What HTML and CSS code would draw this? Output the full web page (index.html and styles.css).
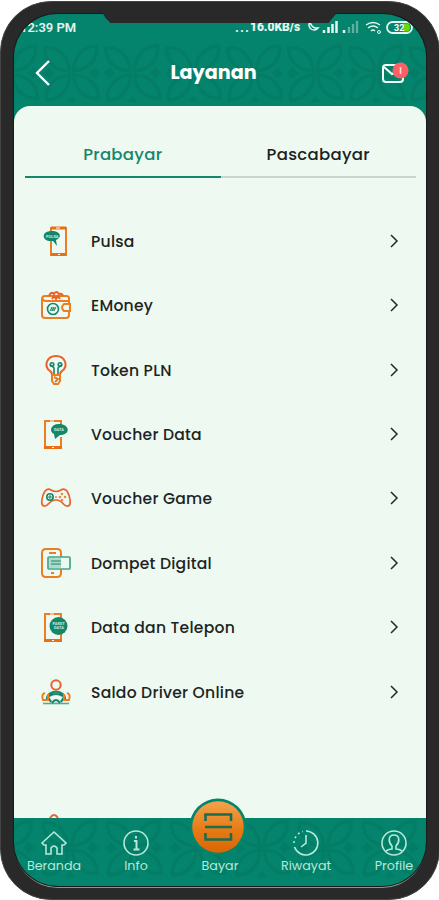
FILE: index.html
```html
<!DOCTYPE html>
<html lang="id">
<head>
<meta charset="utf-8">
<title>Layanan</title>
<link rel="stylesheet" href="styles.css">
</head>
<body>
<div class="phone">
  <div class="notch"></div>
  <main class="screen">
    <header class="header">
      <svg class="batik" aria-hidden="true">
        <defs>
          <g id="flower" fill="none" stroke="#057660" stroke-width="3.6">
            <path d="M2 -2C2 -14 10 -27 25 -27C27 -13 16 -3 2 -2Z"/>
            <path transform="rotate(90)" d="M2 -2C2 -14 10 -27 25 -27C27 -13 16 -3 2 -2Z"/>
            <path transform="rotate(180)" d="M2 -2C2 -14 10 -27 25 -27C27 -13 16 -3 2 -2Z"/>
            <path transform="rotate(270)" d="M2 -2C2 -14 10 -27 25 -27C27 -13 16 -3 2 -2Z"/>
            <path d="M23 -6L29 0L23 6L17 0ZM-23 -6L-29 0L-23 6L-17 0Z" fill="#057660" stroke="none"/>
            <path d="M-5 29L0 23L5 29Z" fill="#057660" stroke="none"/>
          </g>
          <pattern id="batik-top" x="27" y="29" width="61" height="61" patternUnits="userSpaceOnUse"><use href="#flower" x="30.5" y="30"/></pattern>
          <pattern id="batik-bottom" x="24" y="-3" width="64" height="66" patternUnits="userSpaceOnUse"><use href="#flower" x="32" y="33"/></pattern>
        </defs>
        <rect y="29" width="412" height="61" fill="url(#batik-top)" opacity=".5"/>
      </svg>
      <div class="status">
        <span class="clock">12:39 PM</span>
        <span class="speed">...<b>16.0KB/s</b></span>
        <svg class="indicators" width="112" height="16" viewBox="0 0 112 16" fill="none" stroke="#e5f5ef">
          <path d="M6 3A5 5 0 1 0 14 9Q8 10 6 3Z" stroke-width="1.5"/>
          <path d="M20 14v-3M24.500 14V8M28.500 14V5M32.500 14V2" stroke-width="2.5"/>
          <path d="M40 14v-3" stroke-width="2.5"/><path d="M45 14V8M49 14V5M53 14V2" stroke-width="2.3" opacity=".4"/>
          <path d="M62 6Q69 1 76 6M64 9Q69 5 74 9M67 12Q69 10 71 12" stroke-width="1.4"/><circle cx="75" cy="13" r="1.5"/>
          <rect x="83" y="3" width="25" height="11" rx="5.500" stroke-width="1.8"/><path d="M99 4.500h5q4 4 0 8h-5z" fill="#6bd60b" stroke="none"/>
          <text x="90" y="12" class="battery">32</text>
        </svg>
      </div>
      <div class="titlebar">
        <svg class="back" width="18" height="28" viewBox="0 0 18 28"><path d="M15 2L3 14L15 26" fill="none" stroke="#fff" stroke-width="2.4"/></svg>
        <h1>Layanan</h1>
        <svg class="mail" width="29" height="26" viewBox="0 0 29 26"><rect x="3" y="5" width="20" height="17" rx="3" fill="none" stroke="#f3fff9" stroke-width="2"/><path d="M4 7L12 14L17 12" fill="none" stroke="#f3fff9" stroke-width="2"/><circle cx="20.500" cy="10.500" r="8" fill="#fb6066"/><path d="M20.500 7v7" stroke="#ffdada" stroke-width="1.6"/></svg>
      </div>
    </header>

    <section class="sheet">
      <nav class="tabs">
        <span class="tab active">Prabayar</span>
        <span class="tab">Pascabayar</span>
      </nav>
      <ul class="services">
        <li><svg class="icon" viewBox="0 0 32 32"><path d="M11 7V3H26V30H11V15" class="o"/><path d="M11 28H26V31H11Z" fill="#e96f12"/><path d="M11 3h15" stroke="#e96f12" stroke-width="3"/><path d="M16 3h4M18 29.5h2" stroke="#fff"/><path d="M12 6C1 6 2 15 9 16L13 16L17 21L16 15C23 12 20 6 12 6Z" class="tf"/><text x="6" y="13" class="tiny">PULSA</text></svg><span>Pulsa</span><svg class="chev" viewBox="0 0 10 14"><path d="M2 1L8 7L2 13"/></svg></li>
        <li><svg class="icon" viewBox="0 0 32 32"><path d="M29 15V9Q29 7 26 7H5Q2 7 2 10V26Q2 29 5 29H26Q29 29 29 26V22M2 9Q3 12 6 12H28" class="o"/><path d="M9 7Q11 2 14 5Q16 1 19 5Q22 4 23 7M12 10l2-3 2 3 2-3 2 3" class="o red"/><path d="M30 15H24Q20 18.500 24 22H30Z" class="o"/><circle cx="13" cy="20" r="5.500" class="t"/><path d="M10 22l2-4v4l2-4v4l2-4" class="t thin"/></svg><span>EMoney</span><svg class="chev" viewBox="0 0 10 14"><path d="M2 1L8 7L2 13"/></svg></li>
        <li><svg class="icon" viewBox="0 0 32 32"><path d="M12 21Q12 18 10 17C3 12 7 2 16 2C25 2 29 12 22 17Q20 18 20 21" class="o red"/><path d="M14 20V14L11 11M18 20V14L21 11" class="t"/><circle cx="12" cy="10.500" r="1.800" class="t"/><circle cx="20" cy="10.500" r="1.800" class="t"/><path d="M12 21H20V27L18 30H14L12 27Z" class="o"/><path d="M14 23l4 2-3 3" class="o"/></svg><span>Token PLN</span><svg class="chev" viewBox="0 0 10 14"><path d="M2 1L8 7L2 13"/></svg></li>
        <li><svg class="icon" viewBox="0 0 32 32"><path d="M21 7V3H5V30H21V19" class="o"/><path d="M4 28H22V31H4Z" fill="#e96f12"/><path d="M10 3h4M12 29.500h2" stroke="#fff"/><path d="M19 6C10 6 9 14 14 16L15 21L20 17C31 17 30 6 19 6Z" class="tf"/><text x="14" y="13" class="tiny">DATA</text></svg><span>Voucher Data</span><svg class="chev" viewBox="0 0 10 14"><path d="M2 1L8 7L2 13"/></svg></li>
        <li><svg class="icon" viewBox="0 0 32 32"><path d="M5 9Q8 6 11 8Q16 11 21 8Q24 6 27 9C30 14 32 23 28 24C24 25 23 20 20 19Q16 17 12 19C9 20 7 25 4 24C0 23 2 14 5 9Z" class="o red thin-line"/><circle cx="10" cy="15" r="3.200" class="t"/><path d="M10 13v4M8 15h4" class="t thin"/><g fill="#eb8a42"><circle cx="22" cy="12" r="1.300"/><circle cx="25" cy="15" r="1.300"/><circle cx="20" cy="15" r="1.300"/><circle cx="22" cy="18" r="1.300"/><circle cx="16" cy="15" r="1"/></g></svg><span>Voucher Game</span><svg class="chev" viewBox="0 0 10 14"><path d="M2 1L8 7L2 13"/></svg></li>
        <li><svg class="icon" viewBox="0 0 32 32"><path d="M21 10V6Q21 2 17 2H6Q2 2 2 6V26Q2 30 6 30H17Q21 30 21 26V22M9 6h7M11 26h3" class="o"/><rect x="8" y="10" width="22" height="12" rx="1" fill="#eaf9ef" class="card"/><path d="M9 11H21V21H9Z" fill="#aedbcb"/><path d="M11 14h10M11 17h10" class="t thin"/></svg><span>Dompet Digital</span><svg class="chev" viewBox="0 0 10 14"><path d="M2 1L8 7L2 13"/></svg></li>
        <li><svg class="icon" viewBox="0 0 32 32"><path d="M21 7V3H5V30H21V22" class="o"/><path d="M4 28H22V31H4Z" fill="#e96f12"/><path d="M10 3h4M12 29.500h2" stroke="#fff"/><circle cx="18.500" cy="15" r="9" class="tf"/><text x="12.500" y="14" class="tiny">PAKET</text><text x="14" y="18" class="tiny">DATA</text></svg><span>Data dan Telepon</span><svg class="chev" viewBox="0 0 10 14"><path d="M2 1L8 7L2 13"/></svg></li>
        <li><svg class="icon" viewBox="0 0 32 32"><circle cx="16" cy="9" r="4.700" class="o red"/><path d="M7 24C6 13 26 13 25 24M9 20Q16 16 23 20M12 27q4-6 8 0M8 21l3 5M24 21l-3 5" class="t steer"/><path d="M3 27.500H29" class="t" opacity=".7"/><path d="M5 17Q1 18 3 24H8V18M27 17Q31 18 29 24H24V18" class="o"/></svg><span>Saldo Driver Online</span><svg class="chev" viewBox="0 0 10 14"><path d="M2 1L8 7L2 13"/></svg></li>
      </ul>
      <svg class="peek" width="12" height="5" viewBox="0 0 12 5"><path d="M2 5Q6-1 10 5" class="o red"/></svg>
    </section>

    <footer class="nav">
      <svg class="batik" aria-hidden="true"><rect width="412" height="66" fill="url(#batik-bottom)" opacity=".5"/></svg>
      <div class="item"><svg viewBox="0 0 28 28"><path d="M2 14L14 3L26 14L24 16H22V25H17V19Q14 15 11 19V25H6V16H4Z"/></svg><span>Beranda</span></div>
      <div class="item"><svg viewBox="0 0 28 28"><circle cx="14" cy="14" r="12"/><path d="M14 7v2.500M12 12h2.500v8M11.500 20.500h6" stroke-width="2"/></svg><span>Info</span></div>
      <div class="item pay"><svg viewBox="0 0 60 60"><defs><linearGradient id="orange" x2="0" y2="1"><stop stop-color="#f4a34d"/><stop offset=".55" stop-color="#e67b16"/><stop offset="1" stop-color="#dd6500"/></linearGradient></defs><circle cx="30" cy="30" r="28.500" fill="#04846c" stroke="none"/><circle cx="30" cy="30" r="25.800" fill="url(#orange)" stroke="none"/><path d="M17.500 24V17.500H43V24M17 30H44M17.500 36V42.500H43V36" stroke="#1b6c50" stroke-width="2.600"/></svg><span>Bayar</span></div>
      <div class="item"><svg viewBox="0 0 28 28"><path d="M14 2A12 12 0 1 1 2.500 18"/><path d="M2 14A12 12 0 0 1 11 2.500" stroke-dasharray="2 3"/><path d="M14 6V14L9 18"/></svg><span>Riwayat</span></div>
      <div class="item"><svg viewBox="0 0 28 28"><circle cx="14" cy="14" r="12"/><path d="M6 22Q9 20 12 20V17C8 13 8 6 14 6S20 13 16 17V20Q19 20 22 22"/></svg><span>Profile</span></div>
    </footer>
  </main>
</div>
</body>
</html>
```
FILE: styles.css
```css
* { box-sizing: border-box; }
html, body { margin: 0; background: #fff; }
body { width: 439px; height: 900px; overflow: hidden; font-family: Poppins, Inter, "Open Sans", sans-serif; }
.phone { position: relative; width: 439px; height: 900px; padding-top: 2px; }
.phone::before { content: ""; position: absolute; inset: 1px -1px 0 0; border-radius: 51px; background: #292929; border: 1px solid #444; }
.screen { position: relative; width: 412px; height: 872px; margin: 12px 0 0 14px; border-radius: 43px 43px 44px 44px; overflow: hidden; background: #04846c; display: flex; flex-direction: column; box-shadow: 0 0 0 1px #171b1a, 0 2px 0 #8a9691; }
.notch { position: absolute; z-index: 3; left: 102px; top: 12px; width: 236px; height: 11px; background: #292929; clip-path: polygon(0 0, 100% 0, 98.5% 35%, 96% 100%, 3.5% 100%, 1.5% 55%); }
.batik { position: absolute; inset: 0; width: 100%; height: 100%; }
.header { position: relative; height: 104px; flex: none; }
.status { position: relative; display: flex; align-items: center; height: 26px; padding-left: 6px; color: #e5f5ef; font: 600 13px Roboto, sans-serif; }
.clock { width: 215px; white-space: nowrap; }
.speed { width: 69px; font-size: 14px; letter-spacing: 1px; white-space: nowrap; display: flex; align-items: center; }
.speed b { font-size: 12px; letter-spacing: 0; }
.indicators { flex: none; }
.battery { font: 700 9px Roboto, sans-serif; fill: #fff; stroke: none; }
.titlebar { position: relative; display: flex; align-items: center; height: 64px; padding: 0 17px 0 20px; margin-top: 1px; }
h1 { margin: 0 auto; padding-right: 5px; font-size: 19.2px; font-weight: 700; line-height: 27px; padding-bottom: 1px; color: #fff; }
.back { margin-top: -1px; }
.sheet { position: relative; height: 712px; margin-top: -12px; background: #eefaf1; border-radius: 16px 16px 0 0; flex: none; }
.tabs { display: flex; padding: 0 10px 0 11px; height: 72px; }
.tab { flex: 1; display: flex; justify-content: center; align-items: center; padding-top: 26px; border-bottom: 2px solid #c9d5cd; font-size: 16.5px; font-weight: 500; letter-spacing: .3px; color: #1d211f; }
.tab.active { color: #16866b; border-color: #16866b; }
.services { list-style: none; margin: 0; padding: 30.5px 27px 0 26px; }
.services li { height: 64.43px; display: flex; align-items: center; color: #20241f; font-size: 15.6px; font-weight: 500; letter-spacing: .24px; white-space: nowrap; }
.services span { padding-top: 1px; }
.icon { width: 32px; height: 32px; margin-right: 19px; }
.chev { width: 10px; height: 14px; margin-left: auto; fill: none; stroke: #262a28; stroke-width: 1.5; }
.o { fill: none; stroke: #eb7d22; stroke-width: 2; }
.red { stroke: #e9622c; }
.thin-line { stroke-width: 1.7; }
.t { fill: none; stroke: #16866b; stroke-width: 1.6; }
.thin { stroke-width: 1; }
.steer { stroke-width: 2.2; }
.tf { fill: #16866b; }
.card { stroke: #46a38c; stroke-width: 1.7; }
.tiny { font: 700 4px Roboto, sans-serif; letter-spacing: 0; fill: #c6eee0; }
.peek { position: absolute; left: 34px; bottom: 0; }
.nav { position: relative; height: 68px; flex: none; display: flex; color: #b5e9da; }
.item { position: relative; flex: none; display: flex; flex-direction: column; align-items: center; width: 84px; padding-top: 11px; font-size: 12.7px; line-height: 16px; }
.item:nth-of-type(1) { width: 80px; }
.item:nth-of-type(4), .item:nth-of-type(5) { width: 88px; }
.item svg { width: 28px; height: 28px; fill: none; stroke: #b5e9da; stroke-width: 1.6; }
.item span { margin-top: 1px; }
.item.pay { padding-top: 0; margin-top: -21px; }
.item.pay svg { width: 60px; height: 60px; margin-right: 4px; }
```
